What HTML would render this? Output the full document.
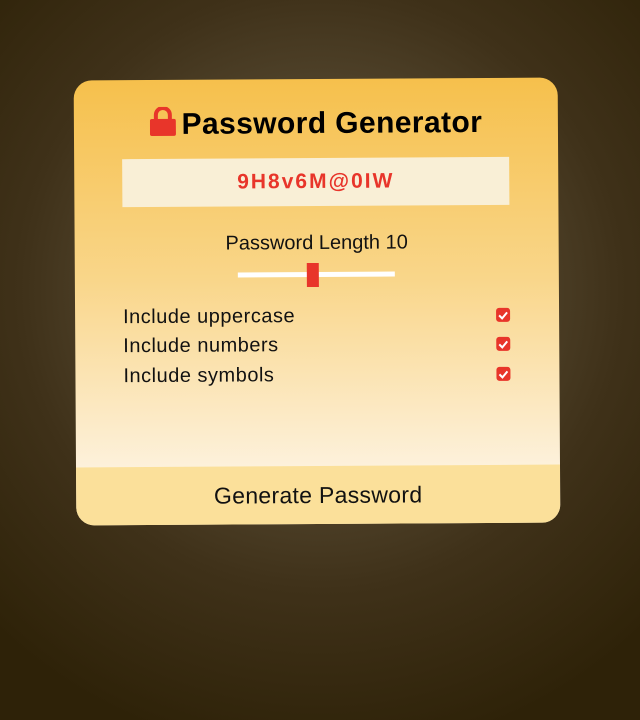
<!DOCTYPE html>
<html><head><style>
html,body{margin:0;width:640px;height:720px;overflow:hidden}
body{background:radial-gradient(circle at 320px 290px,#716550 0,#584b33 150px,#3f3119 300px,#2e2208 470px);font-family:"Liberation Sans",sans-serif;position:relative}
.card{position:absolute;left:75px;top:79px;width:484px;height:445px;border-radius:18px;overflow:hidden;background:linear-gradient(#f6c04c,#f9d68a 45%,#fdf1db 87%);transform:rotate(-0.35deg)}
.title{position:absolute;top:27px;left:0;width:100%;text-align:center;font-size:30px;font-weight:bold;color:#000;letter-spacing:0.4px}
.lock{display:inline-block;vertical-align:-3px;margin-right:6px}
.pw{position:absolute;left:48px;top:79px;width:387px;height:48px;background:#f9efd6;text-align:center;line-height:48px;color:#e8352a;font-weight:bold;font-size:21px;letter-spacing:2px}
.len{position:absolute;top:153px;width:100%;text-align:center;font-size:20px;color:#111}
.track{position:absolute;left:163px;top:193px;width:157px;height:5px;background:#fff}
.thumb{position:absolute;left:232px;top:184px;width:12px;height:24px;background:#e8352a}
.row{position:absolute;left:48px;width:387px;font-size:20px;letter-spacing:0.5px;color:#111}
.cb{position:absolute;right:0;top:4px;width:14px;height:14px;background:#e8352a;border-radius:3px}
.cb svg{display:block}
.foot{position:absolute;left:0;top:387px;width:100%;height:60px;background:#fbe09a;text-align:center;line-height:58px;font-size:23px;letter-spacing:0.3px;color:#111}
</style></head><body>
<div class="card">
<div class="title"><svg class="lock" width="26" height="30" viewBox="0 0 26 30"><path d="M6 13V8a7 7 0 0 1 14 0v5" fill="none" stroke="#e8352a" stroke-width="4"/><rect x="0" y="12" width="26" height="17" rx="2" fill="#e8352a"/></svg>Password Generator</div>
<div class="pw">9H8v6M@0IW</div>
<div class="len">Password Length 10</div>
<div class="track"></div><div class="thumb"></div>
<div class="row" style="top:226px">Include uppercase<span class="cb"><svg width="14" height="14"><path d="M3 7.5l3 3 5-6" stroke="#fff" stroke-width="2" fill="none"/></svg></span></div>
<div class="row" style="top:255px">Include numbers<span class="cb"><svg width="14" height="14"><path d="M3 7.5l3 3 5-6" stroke="#fff" stroke-width="2" fill="none"/></svg></span></div>
<div class="row" style="top:285px">Include symbols<span class="cb"><svg width="14" height="14"><path d="M3 7.5l3 3 5-6" stroke="#fff" stroke-width="2" fill="none"/></svg></span></div>
<div class="foot">Generate Password</div>
</div>
</body></html>
